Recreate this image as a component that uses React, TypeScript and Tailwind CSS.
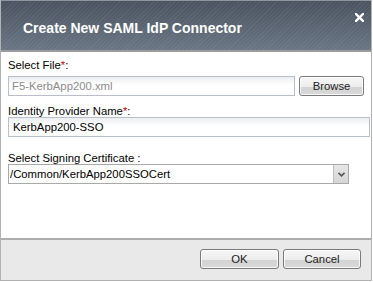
import React from 'react';

function Button({ label, className = '' }: { label: string; className?: string }) {
  return (
    <button
      className={`h-[20px] rounded-[3px] border border-[#7a7a7a] bg-[linear-gradient(to_bottom,#f7f7f7_0%,#ececec_55%,#d3d3d3_56%,#d9d9d9_100%)] text-[11.3px] leading-[12px] text-[#222] shadow-[inset_0_0_0_1px_rgba(255,255,255,0.8)] ${className}`}
    >
      {label}
    </button>
  );
}

function Label({ text, required, className = '' }: { text: string; required?: boolean; className?: string }) {
  return (
    <div className={`text-[11.3px] leading-[12px] text-black ${className}`}>
      {text}
      {required && <span className="text-[#cc0000]">*</span>}
      {required && ':'}
    </div>
  );
}

export default function App() {
  return (
    <div className="h-[282px] w-[373px] bg-white font-['Liberation_Sans',Arial,sans-serif]">
      <div className="w-[372px] border-x border-b border-[#b3b3b3]">
        {/* header */}
        <div className="relative h-[52px] border-t border-b-2 border-t-[#8e959c] border-b-[#9c9c9c] bg-[image:repeating-linear-gradient(135deg,rgba(255,255,255,0.05)_0px,rgba(255,255,255,0.05)_1px,transparent_1px,transparent_3px),linear-gradient(to_bottom,#4a5360,#6a7684)] pl-[22px] pt-[19px]">
          <div className="text-[14px] font-bold leading-[16px] text-white">Create New SAML IdP Connector</div>
          <svg className="absolute left-[354px] top-[12px]" width="9" height="9" viewBox="0 0 9 9">
            <path d="M1 1 L8 8 M8 1 L1 8" stroke="#fff" strokeWidth="2.4" strokeLinecap="square" />
          </svg>
        </div>

        {/* body */}
        <div className="h-[186px] px-[7px] pt-[7px]">
          <Label text="Select File" required />
          <div className="mt-[5px] flex gap-[4px]">
            <div className="flex h-[20px] w-[292px] items-center border border-[#b8bfcb] bg-[linear-gradient(to_bottom,#eceef1,#ffffff_45%)] pl-[3px] text-[11.3px] text-[#8c8c8c]">
              F5-KerbApp200.xml
            </div>
            <Button label="Browse" className="w-[66px]" />
          </div>

          <Label text="Identity Provider Name" required className="mt-[9px]" />
          <div className="flex h-[20px] w-[362px] items-center border border-[#b8bfcb] bg-[linear-gradient(to_bottom,#eceef1,#ffffff_45%)] pl-[4px] text-[11.3px] text-black">
            KerbApp200-SSO
          </div>

          <div className="mt-[15px] text-[11.3px] leading-[12px] text-black">Select Signing Certificate :</div>
          <div className="flex h-[20px] w-[341px] border border-[#a9a9a9] bg-white text-[11.3px] text-black">
            <div className="flex flex-1 items-center pl-[1px]">/Common/KerbApp200SSOCert</div>
            <div className="flex w-[15px] items-center justify-center border-l border-[#bdbdbd] bg-[linear-gradient(to_bottom,#e6e6e6,#d6d6d6)]">
              <svg width="7" height="5" viewBox="0 0 7 5">
                <path d="M0.5 0.8 L3.5 3.8 L6.5 0.8" fill="none" stroke="#555" strokeWidth="1.6" />
              </svg>
            </div>
          </div>
        </div>

        {/* footer */}
        <div className="flex h-[42px] justify-end gap-[4px] border-t-2 border-[#adadad] bg-[#e9e9e9] pr-[10px] pt-[9px]">
          <Button label="OK" className="w-[79px]" />
          <Button label="Cancel" className="w-[78px]" />
        </div>
      </div>
    </div>
  );
}
